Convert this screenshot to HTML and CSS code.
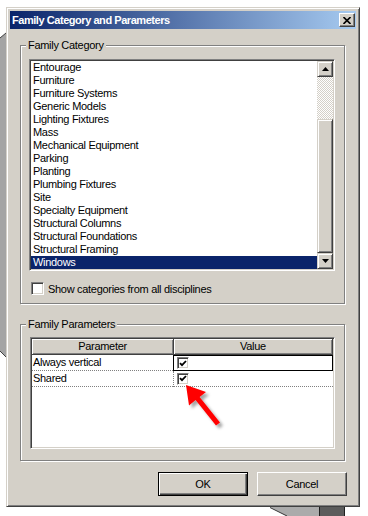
FILE: index.html
```html
<!DOCTYPE html>
<html lang="en">
<head>
    <meta charset="UTF-8">
    <meta name="viewport" content="width=device-width, initial-scale=1.0">
    <title>Family Category and Parameters</title>
    <link rel="stylesheet" href="styles.css">
</head>
<body>
    <!-- Bits of the windows behind the dialog -->
    <svg class="backdrop" width="368" height="516" viewBox="0 0 368 516">
        <polygon points="0,38 6,33 6,357 0,351" fill="#a4a4a4"/>
        <polyline points="0,38 6,33" stroke="#404040" fill="none"/>
        <polyline points="0,351 6,357" stroke="#404040" fill="none"/>
        <polygon points="270,507 319,507 319,516 287,516" fill="#ababab"/>
        <polyline points="270,507.5 287,516" stroke="#303030" fill="none"/>
        <rect x="319" y="507" width="26" height="9" fill="#5c5c5c"/>
        <line x1="319.5" y1="507" x2="319.5" y2="516" stroke="#202020"/>
        <line x1="344.5" y1="507" x2="344.5" y2="516" stroke="#202020"/>
    </svg>

    <div class="dialog">
        <div class="titlebar">
            <span class="title">Family Category and Parameters</span>
            <button class="close">
                <svg width="8" height="7" viewBox="0 0 8 7"><path d="M0.5 0 L7.5 7 M7.5 0 L0.5 7" stroke="#000" stroke-width="1.6"/></svg>
            </button>
        </div>

        <div class="content">
            <div class="group group-cat">
                <span class="group-label">Family Category</span>
                <div class="listbox">
                    <ul class="items">
                        <li>Entourage</li>
                        <li>Furniture</li>
                        <li>Furniture Systems</li>
                        <li>Generic Models</li>
                        <li>Lighting Fixtures</li>
                        <li>Mass</li>
                        <li>Mechanical Equipment</li>
                        <li>Parking</li>
                        <li>Planting</li>
                        <li>Plumbing Fixtures</li>
                        <li>Site</li>
                        <li>Specialty Equipment</li>
                        <li>Structural Columns</li>
                        <li>Structural Foundations</li>
                        <li>Structural Framing</li>
                        <li class="selected">Windows</li>
                    </ul>
                    <div class="scrollbar">
                        <div class="sb-btn">
                            <svg width="7" height="4" viewBox="0 0 7 4"><polygon points="0,4 3.5,0 7,4" fill="#000"/></svg>
                        </div>
                        <div class="sb-track"></div>
                        <div class="sb-thumb"></div>
                        <div class="sb-btn">
                            <svg width="7" height="4" viewBox="0 0 7 4"><polygon points="0,0 7,0 3.5,4" fill="#000"/></svg>
                        </div>
                    </div>
                </div>
                <label class="check-row">
                    <span class="checkbox"></span>
                    Show categories from all disciplines
                </label>
            </div>

            <div class="group group-params">
                <span class="group-label">Family Parameters</span>
                <div class="grid">
                    <div class="grid-head">
                        <div class="hcell">Parameter</div>
                        <div class="hcell">Value</div>
                    </div>
                    <div class="grid-row current">
                        <div class="cell name">Always vertical</div>
                        <div class="cell value">
                            <span class="checkbox small"><svg width="8" height="7" viewBox="0 0 8 7"><polyline points="1,3.2 3,5.2 7,1" stroke="#000" stroke-width="1.8" fill="none"/></svg></span>
                        </div>
                    </div>
                    <div class="grid-row">
                        <div class="cell name">Shared</div>
                        <div class="cell value">
                            <span class="checkbox small"><svg width="8" height="7" viewBox="0 0 8 7"><polyline points="1,3.2 3,5.2 7,1" stroke="#000" stroke-width="1.8" fill="none"/></svg></span>
                        </div>
                    </div>
                </div>
            </div>

            <div class="buttons">
                <button class="btn default">OK</button>
                <button class="btn">Cancel</button>
            </div>
        </div>
    </div>

    <!-- Red callout arrow pointing at the Shared checkbox -->
    <svg class="callout" width="368" height="516" viewBox="0 0 368 516">
        <defs>
            <filter id="shadow" x="-50%" y="-50%" width="200%" height="200%">
                <feDropShadow dx="3" dy="3" stdDeviation="1.5" flood-color="#000" flood-opacity="0.35"/>
            </filter>
        </defs>
        <polygon filter="url(#shadow)" fill="#f00"
            points="186,385 206,392 199.6,397 220,422.5 216,425.6 195.6,400.1 189,405.5"/>
    </svg>
</body>
</html>
```

FILE: styles.css
```css
/* Classic Windows dialog look */
body {
    margin: 0;
    background: #fff;
    font-family: "Liberation Sans", Arial, sans-serif;
    font-size: 11px;
    letter-spacing: -0.3px;
    color: #000;
}

.backdrop,
.callout {
    position: absolute;
    top: 0;
    left: 0;
}

.callout {
    pointer-events: none;
    z-index: 2;
}

.dialog {
    position: relative;
    z-index: 1;
    width: 354px;
    margin: 7px 0 0 6px;
    padding: 3px;
    box-sizing: border-box;
    background: #d4d0c8;
    border: 1px solid;
    border-color: #d4d0c8 #404040 #404040 #d4d0c8;
    box-shadow: inset 1px 1px #fff, inset -1px -1px #808080;
}

/* Title bar */
.titlebar {
    height: 18px;
    display: flex;
    align-items: center;
    justify-content: space-between;
    padding: 0 1px 0 2px;
    background: linear-gradient(to right, #0a246a, #a6caf0);
    color: #fff;
    font-weight: bold;
    letter-spacing: -0.45px;
}

.close {
    width: 16px;
    height: 14px;
    padding: 0;
    display: flex;
    align-items: center;
    justify-content: center;
    background: #d4d0c8;
    border: 1px solid;
    border-color: #fff #404040 #404040 #fff;
    box-shadow: inset -1px -1px #808080;
}

.content {
    padding: 16px 0 7px 10px;
}

/* Etched group boxes */
.group {
    position: relative;
    width: 325px;
    box-sizing: border-box;
    border: 1px solid #808080;
    box-shadow: inset 1px 1px #fff, 1px 1px #fff;
}

.group-label {
    position: absolute;
    top: -7px;
    left: 5px;
    padding: 0 2px;
    line-height: 13px;
    background: #d4d0c8;
}

.group-cat {
    padding: 13px 8px 8px 8px;
}

.group-params {
    margin-top: 20px;
    padding: 12px 8px 11px 9px;
}

/* List box */
.listbox {
    display: flex;
    width: 306px;
    height: 212px;
    box-sizing: border-box;
    padding: 1px;
    background: #fff;
    border: 1px solid;
    border-color: #808080 #fff #fff #808080;
    box-shadow: inset 1px 1px #404040, inset -1px -1px #d4d0c8;
}

.items {
    flex: 1;
    list-style: none;
    margin: 0;
    padding: 0;
}

.items li {
    height: 13px;
    line-height: 13px;
    padding-left: 2px;
    white-space: nowrap;
}

.items li.selected {
    background: #0a246a;
    color: #fff;
}

.scrollbar {
    width: 16px;
    display: flex;
    flex-direction: column;
}

.sb-btn,
.sb-thumb {
    box-sizing: border-box;
    background: #d4d0c8;
    border: 1px solid;
    border-color: #d4d0c8 #404040 #404040 #d4d0c8;
    box-shadow: inset 1px 1px #fff, inset -1px -1px #808080;
}

.sb-btn {
    height: 16px;
    display: flex;
    align-items: center;
    justify-content: center;
}

.sb-track {
    height: 42px;
    background: conic-gradient(#fff 25%, #d4d0c8 0 50%, #fff 0 75%, #d4d0c8 0);
    background-size: 2px 2px;
}

.sb-thumb {
    flex: 1;
}

/* Check boxes */
.check-row {
    display: flex;
    align-items: center;
    gap: 4px;
    margin: 11px 0 0 2px;
    height: 13px;
}

.checkbox {
    width: 13px;
    height: 13px;
    box-sizing: border-box;
    display: flex;
    align-items: center;
    justify-content: center;
    background: #fff;
    border: 1px solid;
    border-color: #808080 #fff #fff #808080;
    box-shadow: inset 1px 1px #404040, inset -1px -1px #d4d0c8;
}

.checkbox.small {
    width: 12px;
    height: 12px;
    margin-left: 3px;
}

/* Parameter grid */
.grid {
    width: 305px;
    height: 112px;
    box-sizing: border-box;
    padding: 1px;
    background: #fff;
    border: 1px solid;
    border-color: #808080 #fff #fff #808080;
    box-shadow: inset 1px 1px #404040, inset -1px -1px #d4d0c8;
}

.grid-head,
.grid-row {
    display: grid;
    grid-template-columns: 141px 1fr;
    height: 16px;
}

.hcell {
    box-sizing: border-box;
    text-align: center;
    line-height: 14px;
    background: #d4d0c8;
    border-right: 1px solid #404040;
    border-bottom: 1px solid #404040;
    box-shadow: inset 1px 1px #fff, inset -1px -1px #808080;
}

.hcell:first-child {
    width: 142px;
}

.hcell:last-child {
    margin-left: 1px;
}

.cell {
    box-sizing: border-box;
    border-bottom: 1px dotted #808080;
}

.cell.name {
    padding-left: 1px;
    line-height: 15px;
    white-space: nowrap;
}

.cell.value {
    display: flex;
    align-items: center;
    border-left: 1px dotted #808080;
}

.grid-row.current .cell.value {
    border: 1px solid #000;
}

/* Dialog buttons */
.buttons {
    display: flex;
    justify-content: flex-end;
    gap: 9px;
    margin-top: 11px;
    padding-right: 9px;
}

.btn {
    width: 90px;
    height: 24px;
    padding: 0;
    font-family: "Liberation Sans", Arial, sans-serif;
    font-size: 11px;
    letter-spacing: -0.3px;
    color: #000;
    background: #d4d0c8;
    border: 1px solid;
    border-color: #fff #404040 #404040 #fff;
    box-shadow: inset -1px -1px #808080;
}

.btn.default {
    border: 1px solid #000;
    box-shadow: inset 1px 1px #fff, inset -1px -1px #404040, inset -2px -2px #808080;
}
```
